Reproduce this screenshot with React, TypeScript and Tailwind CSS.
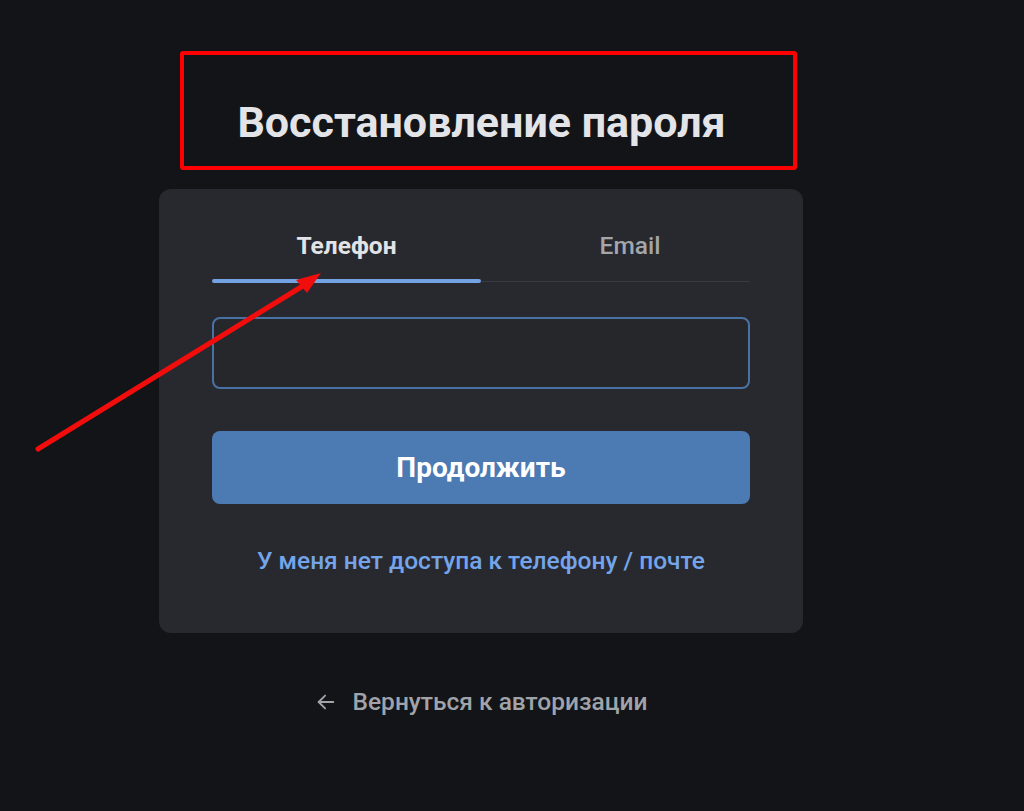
import React from 'react';

const font = { fontFamily: 'Roboto, "Noto Sans", Arial, sans-serif' };

function Tabs() {
  return (
    <div className="flex">
      <button className="flex flex-1 flex-col items-center">
        <span className="pt-[42px] pb-[18px] text-[24.5px] leading-[30px] font-bold text-[#e1e3e6]">Телефон</span>
        <span className="h-[4px] w-full rounded-full bg-[#74a3e3]" />
      </button>
      <button className="flex flex-1 flex-col items-center">
        <span className="pt-[42px] pb-[18px] pl-[29px] text-[24.5px] leading-[30px] font-medium text-[#a3a6ab]">Email</span>
        <span className="flex h-[4px] w-full items-center">
          <span className="h-[1px] w-full bg-[#383a40]" />
        </span>
      </button>
    </div>
  );
}

function RedArrow() {
  return (
    <svg className="pointer-events-none absolute left-0 top-0" width="1024" height="811">
      <line x1="38" y1="449" x2="306" y2="284" stroke="#f20d0d" strokeWidth="5" strokeLinecap="round" />
      <polygon points="321,273 296,280 307,293" fill="#f20d0d" />
    </svg>
  );
}

export default function App() {
  return (
    <div className="relative h-[811px] w-full overflow-hidden bg-[#131417]" style={font}>
      <div className="ml-[159px] flex w-[644px] flex-col pt-[51px]">
        <div className="ml-[21px] flex h-[119px] w-[617px] items-center justify-center rounded-[3px] border-[4px] border-[#ff0000] pt-[22px] pr-[14px]">
          <h1 className="text-[43px] font-bold leading-[50px] text-[#e2e4e8]">Восстановление пароля</h1>
        </div>

        <div className="mt-[19px] rounded-[12px] bg-[#28292e] px-[53px] pb-[57px]">
          <Tabs />
          <input
            className="mt-[34px] block h-[72px] w-full rounded-[8px] border-2 border-[#4a71a3] bg-[#25272b] px-4 text-[20px] text-white outline-none"
            type="tel"
          />
          <button className="mt-[42px] flex h-[73px] w-full items-center justify-center rounded-[8px] bg-[#4c7ab2] text-[28px] font-bold text-white">
            Продолжить
          </button>
          <div className="mt-[42px] text-center text-[24.5px] leading-[30px] font-medium text-[#74a5ea]">
            У меня нет доступа к телефону / почте
          </div>
        </div>

        <div className="mt-[54px] flex items-center justify-center gap-[16px] text-[#a0a4aa]">
          <svg width="22" height="22" viewBox="0 0 24 24" fill="none" stroke="currentColor" strokeWidth="2" strokeLinecap="round" strokeLinejoin="round">
            <path d="M20 12H4" />
            <path d="M11 19l-7-7 7-7" />
          </svg>
          <span className="text-[24.5px] leading-[30px] font-medium">Вернуться к авторизации</span>
        </div>
      </div>
      <RedArrow />
    </div>
  );
}
